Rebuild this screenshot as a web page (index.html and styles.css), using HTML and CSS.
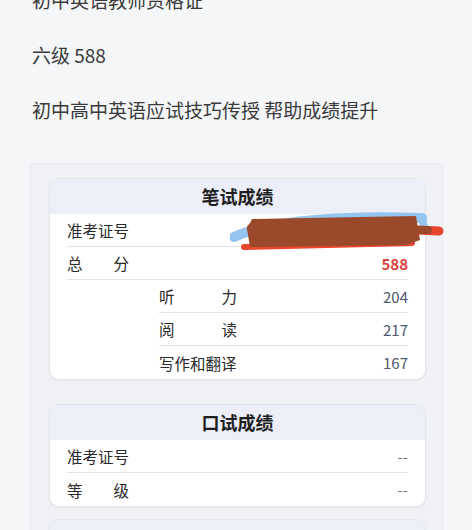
FILE: index.html
```html
<!DOCTYPE html>
<html lang="zh-CN">
<head>
  <meta charset="UTF-8">
  <title>成绩查询</title>
  <meta name="viewport" content="width=device-width, initial-scale=1">
  <link rel="stylesheet" href="styles.css">
</head>
<body>
  <div class="intro">
    <p>初中英语教师资格证</p>
    <p>六级 588</p>
    <p>初中高中英语应试技巧传授 帮助成绩提升</p>
  </div>

  <div class="panel">
    <div class="card">
      <div class="card-head">笔试成绩</div>
      <div class="row">
        <span class="label">准考证号</span>
        <span class="value"></span>
        <svg class="scribble" width="216" height="44" viewBox="0 0 216 44">
          <path d="M4 27 C 40 10, 120 5, 192 8" stroke="#93c5f0" stroke-width="10" fill="none" stroke-linecap="round"/>
          <path d="M192 8 L194 17" stroke="#93c5f0" stroke-width="8" fill="none" stroke-linecap="round"/>
          <path d="M14 37 L182 33" stroke="#e9452f" stroke-width="6" fill="none" stroke-linecap="round"/>
          <path d="M186 20 L209 21" stroke="#e9452f" stroke-width="9" fill="none" stroke-linecap="round"/>
          <path d="M22 9 L186 6 L190 30 L176 35 L20 37 L17 19 Z" fill="#9a4a2b"/>
          <path d="M21 18 L198 20" stroke="#9a4a2b" stroke-width="8" fill="none" stroke-linecap="round"/>
        </svg>
      </div>
      <div class="row">
        <span class="label w4"><span>总</span><span>分</span></span>
        <span class="value total">588</span>
      </div>
      <div class="row sub">
        <span class="label w5"><span>听</span><span>力</span></span>
        <span class="value">204</span>
      </div>
      <div class="row sub">
        <span class="label w5"><span>阅</span><span>读</span></span>
        <span class="value">217</span>
      </div>
      <div class="row sub">
        <span class="label">写作和翻译</span>
        <span class="value">167</span>
      </div>
    </div>

    <div class="card short">
      <div class="card-head">口试成绩</div>
      <div class="row">
        <span class="label">准考证号</span>
        <span class="value dash">--</span>
      </div>
      <div class="row">
        <span class="label w4"><span>等</span><span>级</span></span>
        <span class="value dash">--</span>
      </div>
    </div>

    <div class="card">
      <div class="card-head"></div>
    </div>
  </div>
</body>
</html>
```

FILE: styles.css
```css
* { box-sizing: border-box; }
body {
  margin: 0;
  background: #f5f6f7;
  font-family: "Noto Sans CJK SC", "Noto Sans", sans-serif;
  color: #333;
}
.intro {
  margin-top: -14px;
  padding: 0 32px;
}
.intro p {
  margin: 0 0 28px;
  font-size: 19px;
  line-height: 27px;
  color: #3a3a3c;
}
.intro p:last-child {
  margin-bottom: 40px;
}
.panel {
  margin-left: 30px;
  width: 413px;
  padding: 14px 16px 0 18px;
  background: #f0f1f4;
  border: 1px solid #e9ebef;
  border-bottom: none;
  height: 400px;
}
.card {
  background: #fff;
  border: 1px solid #e3e5ea;
  border-radius: 10px;
  margin-bottom: 24px;
  box-shadow: 0 1px 2px rgba(0, 0, 0, 0.04);
}
.card.short {
  margin-bottom: 12px;
}
.card-head {
  height: 35px;
  line-height: 35px;
  text-align: center;
  font-size: 18px;
  font-weight: 700;
  color: #1f1f1f;
  background: #eceef8;
  border-radius: 9px 9px 0 0;
}
.row {
  position: relative;
  display: flex;
  justify-content: space-between;
  align-items: center;
  height: 33px;
  margin: 0 17px;
  border-bottom: 1px solid #e1e3e8;
  font-size: 15.5px;
}
.row:last-child {
  border-bottom: none;
}
.row.sub {
  margin-left: 109px;
}
.label {
  color: #2b2b2b;
}
.label.w4,
.label.w5 {
  display: flex;
  justify-content: space-between;
}
.label.w4 { width: 62px; }
.label.w5 { width: 78px; }
.value {
  font-size: 15px;
  color: #4e596b;
}
.value.total {
  color: #d7433e;
  font-weight: 700;
}
.value.dash {
  color: #777;
}
.scribble {
  position: absolute;
  left: 163px;
  top: -4px;
}
```
